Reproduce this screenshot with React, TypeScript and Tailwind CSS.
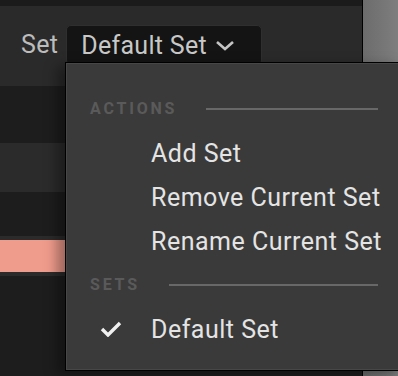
const rows = ["Add Set", "Remove Current Set", "Rename Current Set"];

const SectionHeader = ({ label }: { label: string }) => (
  <div className="h-[44px] flex items-center">
    <span className="text-[16px] font-bold tracking-[2.8px] text-[#5a5a5a] leading-none">{label}</span>
    <div className="flex-1 h-[2px] bg-[#686868] ml-[29px]" />
  </div>
);

const MenuItem = ({ label, checked }: { label: string; checked?: boolean }) => (
  <div className="h-[44px] flex items-center whitespace-nowrap">
    <div className="w-[61px] shrink-0 flex items-center pl-[10px]">
      {checked && (
        <svg width="22" height="16" viewBox="0 0 22 16">
          <path d="M2 8 L8 14 L20 2" fill="none" stroke="#f0f0f0" strokeWidth="3.4" />
        </svg>
      )}
    </div>
    <span className="text-[25px] tracking-[0.5px] text-[#e4e4e4] leading-none whitespace-nowrap">{label}</span>
  </div>
);

const App = () => {
  return (
    <div
      className="relative w-[398px] h-[376px] overflow-hidden flex bg-[#1d1d1d]"
      style={{ fontFamily: "Roboto, 'Noto Sans', sans-serif" }}
    >
      {/* Left editor column */}
      <div className="w-[363px] flex flex-col border-r border-black">
        <div className="h-[6px] bg-[#1b1b1b]" />
        <div className="h-[80px] bg-[#2a2a2a] flex items-start pt-[19px] pl-[21px] gap-[8px]">
          <span className="text-[25px] tracking-[0.3px] text-[#bcbcbc] leading-[40px]">Set</span>
          <div className="h-[40px] w-[196px] rounded-[5px] bg-[#141414] border border-[#2f2f2f] flex items-center pl-[14px] gap-[8px] whitespace-nowrap">
            <span className="text-[25px] tracking-[0.3px] text-[#c8c8c8] leading-none">Default Set</span>
            <svg width="20" height="11" viewBox="0 0 20 11">
              <path d="M2 2 L10 9 L18 2" fill="none" stroke="#c4c4c4" strokeWidth="2.6" />
            </svg>
          </div>
        </div>
        <div className="h-[57px] bg-[#1d1d1d]" />
        <div className="h-[49px] bg-[#2b2b2b]" />
        <div className="h-[44px] bg-[#1d1d1d]" />
        <div className="h-[4px] bg-[#2b2b2b]" />
        <div className="h-[32px] bg-[#f09c8c]" />
        <div className="h-[4px] bg-[#2b2b2b]" />
        <div className="flex-1 bg-[#1d1d1d]" />
      </div>

      {/* Right viewport */}
      <div className="flex-1 bg-gradient-to-r from-[#6c6c6c] to-[#7e7e7e]" />

      {/* Dropdown menu */}
      <div className="absolute left-[65px] top-[62px] w-[340px] h-[309px] bg-[#3a3a3a] border border-black shadow-[inset_0_0_0_1px_#474747,-8px_4px_12px_rgba(0,0,0,0.35)] pt-[24px] pl-[24px] pr-[26px] flex flex-col">
        <SectionHeader label="ACTIONS" />
        {rows.map((r) => (
          <MenuItem key={r} label={r} />
        ))}
        <SectionHeader label="SETS" />
        <MenuItem label="Default Set" checked />
      </div>
    </div>
  );
};

export default App;
